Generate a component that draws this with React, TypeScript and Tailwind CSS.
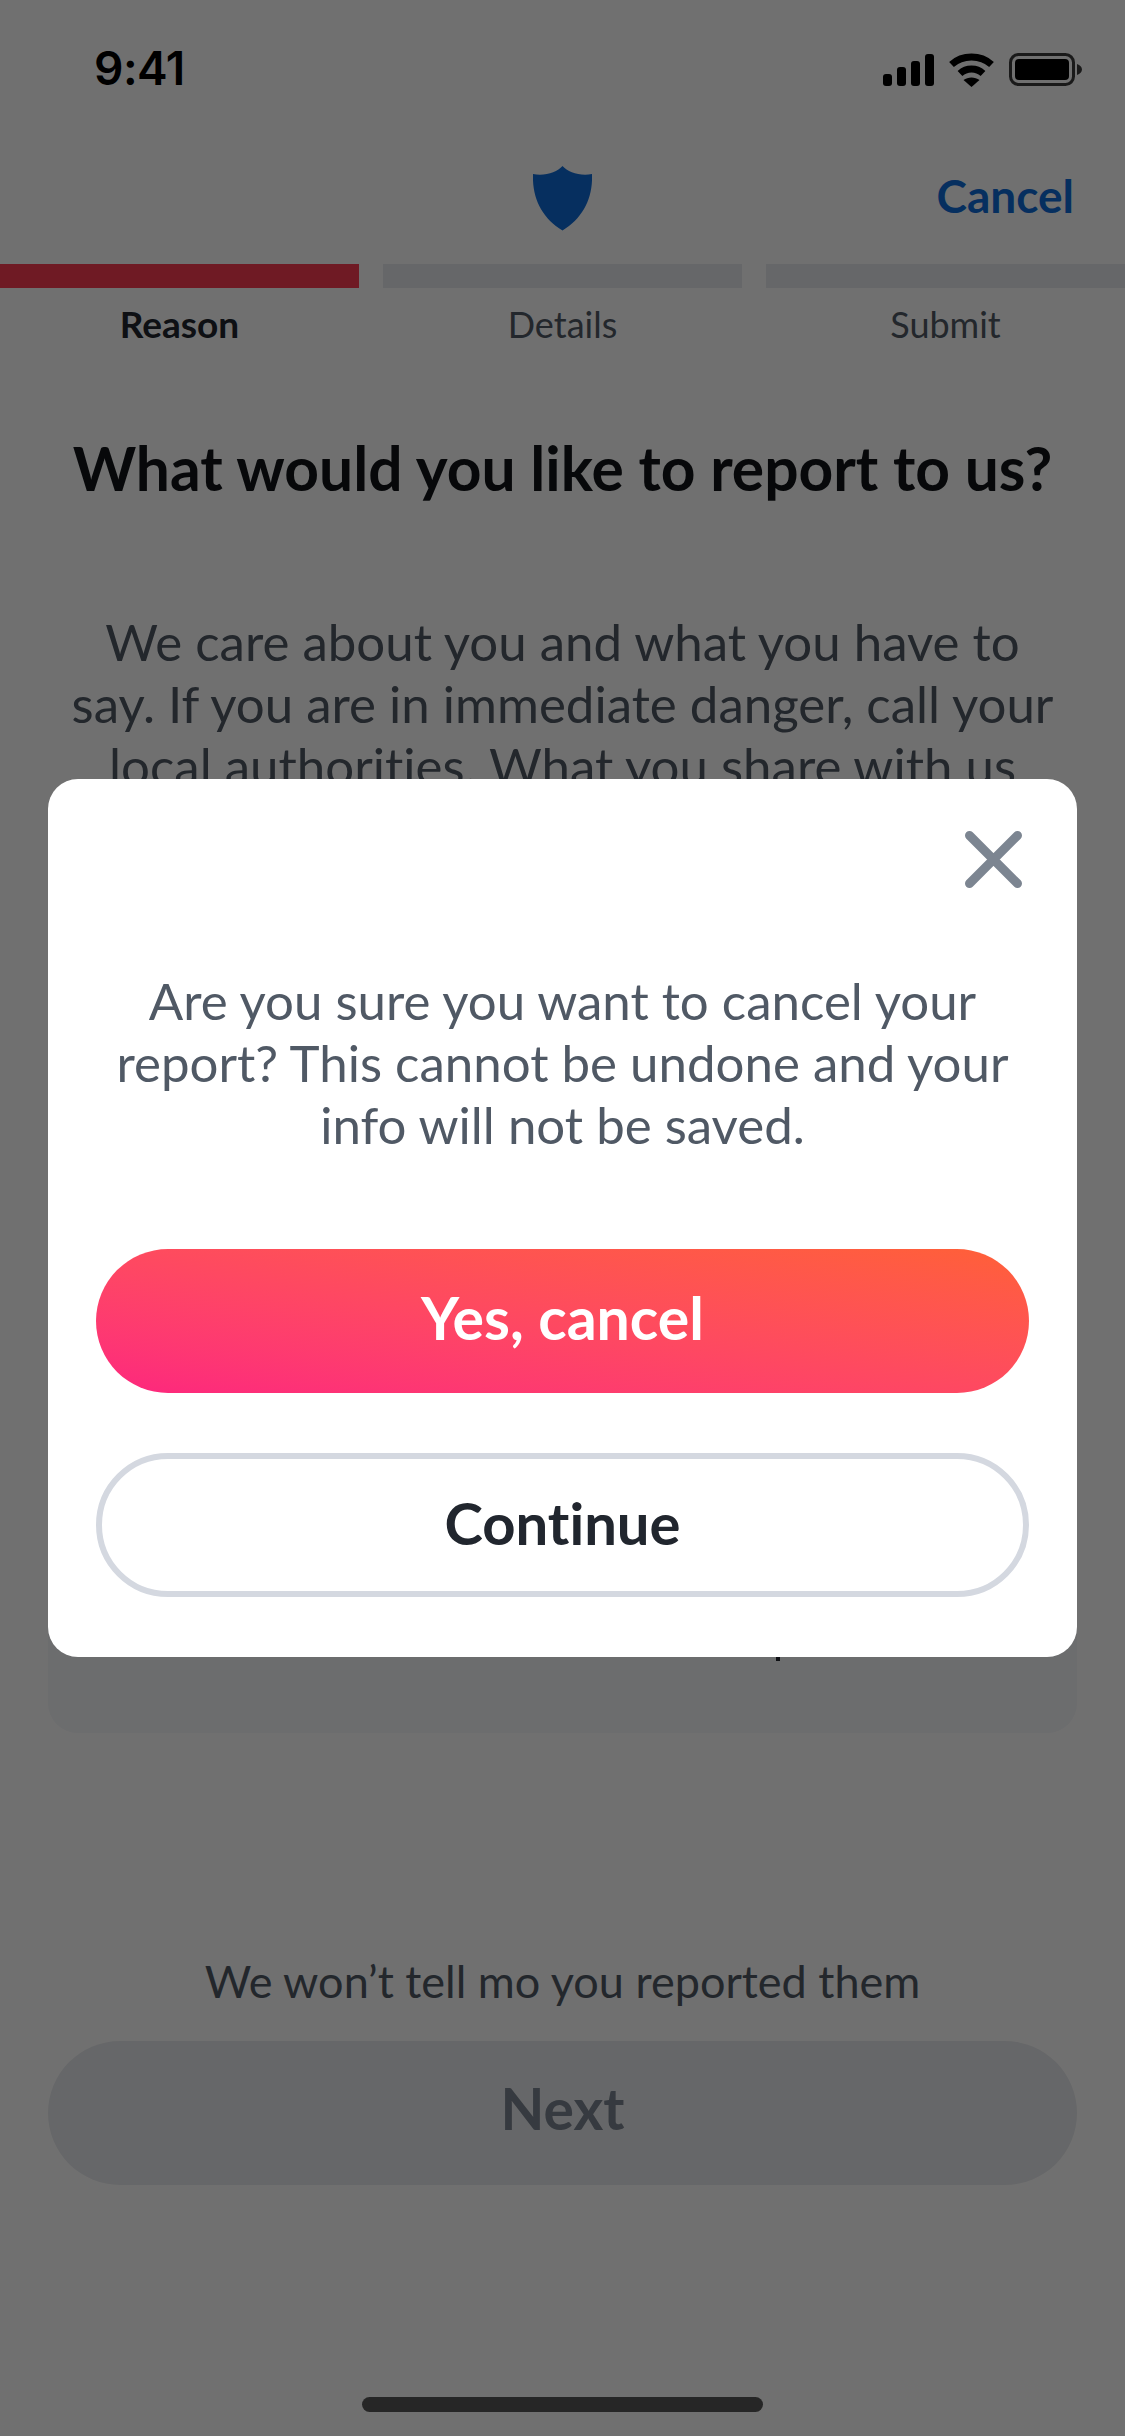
const font = "font-['Lato','Noto_Sans',sans-serif] [font-variant-ligatures:none]";

const SignalIcon = () => (
  <svg width="51" height="32" viewBox="0 0 51 32" fill="#000">
    <rect x="0" y="20" width="9" height="12" rx="3" />
    <rect x="14" y="13" width="9" height="19" rx="3" />
    <rect x="28" y="7" width="9" height="25" rx="3" />
    <rect x="42" y="0" width="9" height="32" rx="3" />
  </svg>
);

const WifiIcon = () => (
  <svg width="45" height="34" viewBox="0 0 45 34">
    <path d="M2.5 11.5C13.5 1.500 31.500 1.500 42.500 11.500" fill="none" stroke="#000" strokeWidth="7" />
    <path d="M11 20.500C17.500 14.500 27.500 14.500 34 20.500" fill="none" stroke="#000" strokeWidth="7" />
    <path d="M14.500 27C19 23.500 26 23.500 30.500 27L22.500 34Z" fill="#000" />
  </svg>
);

const BatteryIcon = () => (
  <svg width="73" height="33" viewBox="0 0 73 33">
    <rect x="1.500" y="1.500" width="63" height="30" rx="8" fill="none" stroke="#3d3d3d" strokeWidth="3" />
    <rect x="6" y="6" width="54" height="21" rx="4" fill="#000" />
    <path d="M68 11C71 12 73 14 73 16.500C73 19 71 21 68 22Z" fill="#3d3d3d" />
  </svg>
);

const ShieldIcon = () => (
  <svg width="59" height="65" viewBox="0 0 59 65" fill="#0f6cd8">
    <path d="M29.500 0C35 6 47 10.500 59 8C60 32 50 52 29.500 64.500C9 52 -1 32 0 8C12 10.500 24 6 29.500 0Z" />
  </svg>
);

const CloseIcon = () => (
  <svg width="57" height="57" viewBox="0 0 57 57" fill="none" stroke="#7c8591" strokeWidth="9" strokeLinecap="round">
    <path d="M4.500 4.500L52.500 52.500M52.500 4.500L4.500 52.500" />
  </svg>
);

export default function App() {
  return (
    <div className={`${font} relative w-[1125px] h-[2436px] overflow-hidden bg-white flex flex-col`}>
      {/* status bar */}
      <div className="h-[132px] flex items-start justify-between pt-[53px] pl-[94px] pr-[43px]">
        <span className="font-['Inter',sans-serif] font-semibold text-[46px] leading-[30px] text-black tracking-[-0.5px]">9:41</span>
        <div className="flex items-center gap-[15px] h-[33px]">
          <SignalIcon />
          <WifiIcon />
          <BatteryIcon />
        </div>
      </div>

      {/* nav */}
      <div className="relative h-[132px] flex items-start justify-center pt-[34px]">
        <ShieldIcon />
        <span className="absolute right-[51px] top-[39px] text-[46px] leading-[50px] font-bold text-[#0f6cd8]">Cancel</span>
      </div>

      {/* steps */}
      <div className="flex gap-[24px]">
        <div className="flex-1 flex flex-col items-center">
          <div className="w-full h-[24px] bg-[#fc3d52]" />
          <span className="mt-[16px] text-[37px] leading-[40px] font-bold text-[#21262e]">Reason</span>
        </div>
        <div className="flex-1 flex flex-col items-center">
          <div className="w-full h-[24px] bg-[#e9ebee]" />
          <span className="mt-[16px] text-[36px] leading-[40px] text-[#505965]">Details</span>
        </div>
        <div className="flex-1 flex flex-col items-center">
          <div className="w-full h-[24px] bg-[#e9ebee]" />
          <span className="mt-[16px] text-[36px] leading-[40px] text-[#505965]">Submit</span>
        </div>
      </div>

      <h1 className="mt-[94px] text-center text-[60.5px] leading-[60px] font-bold text-[#111418]">What would you like to report to us?</h1>

      <p className="mt-[113px] mx-[48px] text-center text-[51px] leading-[62px] text-[#505965]">
        We care about you and what you have to<br />
        say. If you are in immediate danger, call your<br />
        local authorities. What you share with us
      </p>

      {/* panel behind the dialog */}
      <div className="mt-[18px] mx-[48px] h-[918px] rounded-[30px] bg-[#f5f7fa] flex flex-col justify-end pb-[72px]">
        <div className="ml-[728px] w-[4px] h-[4px] bg-[#21262e]" />
      </div>

      <p className="mt-[221px] text-center text-[45px] leading-[54px] text-[#505965]">We won’t tell mo you reported them</p>

      <div className="mt-[33px] mx-[48px] h-[144px] rounded-full bg-[#e9ebee] flex items-center justify-center">
        <span className="mb-[8px] text-[57px] font-bold text-[#7c8591]">Next</span>
      </div>

      <div className="mt-auto mb-[24px] mx-auto w-[401px] h-[15px] rounded-full bg-[#585858]" />

      {/* dimmed backdrop */}
      <div className="absolute inset-0 bg-black/[.56]" />

      {/* dialog */}
      <div className="absolute left-[48px] top-[779px] w-[1029px] h-[878px] rounded-[30px] bg-white flex flex-col px-[48px]">
        <div className="flex justify-end pt-[52px] pr-[7px]">
          <CloseIcon />
        </div>
        <p className="mt-[82px] -mx-[20px] text-center text-[51px] leading-[62px] text-[#505965]">
          Are you sure you want to cancel your<br />
          report? This cannot be undone and your<br />
          info will not be saved.
        </p>
        <button className="mt-[93px] h-[144px] pb-[5px] rounded-full bg-linear-to-tr from-[#fd267d] to-[#ff6036] text-white text-[59px] font-bold">Yes, cancel</button>
        <button className="mt-[60px] h-[144px] pb-[6px] rounded-full border-[6px] border-[#d4d8e0] bg-white text-[#21262e] text-[58px] font-bold">Continue</button>
      </div>
    </div>
  );
}
